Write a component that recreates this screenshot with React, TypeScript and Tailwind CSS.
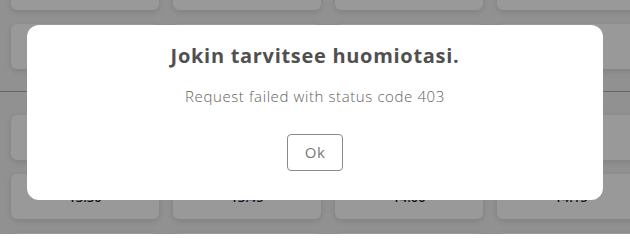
const times = ['13:30', '13:45', '14:00', '14:15'];

function Card({ label }: { label?: string }) {
  return (
    <div className="h-[45px] rounded-md bg-white shadow-[0_2px_6px_rgba(0,0,0,0.12)] flex items-center justify-center">
      {label && <span className="text-[13px] leading-[18px] font-semibold text-[#1e2240]">{label}</span>}
    </div>
  );
}

function Row({ labels }: { labels?: string[] }) {
  return (
    <div className="grid grid-cols-[repeat(4,148px)] gap-x-[14px]">
      {[0, 1, 2, 3].map(i => <Card key={i} label={labels?.[i]} />)}
    </div>
  );
}

export default function App() {
  return (
    <div className="relative h-[234px] w-[630px] overflow-hidden bg-[#f2f2f2]" style={{ fontFamily: '"Open Sans", Lato, sans-serif' }}>
      {/* page behind the overlay */}
      <div className="mt-[-35px] pl-[11px] flex flex-col">
        <div className="flex flex-col gap-[14px]">
          <Row />
          <Row />
        </div>
        <div className="mt-[22px] -ml-[11px] h-px bg-[#aaaaaa]" />
        <div className="mt-[23px] flex flex-col gap-[14px]">
          <Row />
          <Row labels={times} />
          <Row />
        </div>
      </div>

      {/* overlay + dialog */}
      <div className="absolute inset-0 bg-black/40 flex justify-center pt-[25px]">
        <div className="w-[576px] h-[175px] rounded-xl bg-white flex flex-col items-center pt-[17px]">
          <h2 className="text-[20px] leading-[28px] font-bold tracking-[0.7px] text-[#505050]">Jokin tarvitsee huomiotasi.</h2>
          <p className="mt-[16px] text-[15px] leading-[21px] font-light tracking-[0.6px] text-[#5f5f5f]">Request failed with status code 403</p>
          <button className="mt-[27px] w-[56px] h-[37px] rounded border border-[#8a8a8a] text-[15px] tracking-[0.5px] text-[#777777]">Ok</button>
        </div>
      </div>
    </div>
  );
}
